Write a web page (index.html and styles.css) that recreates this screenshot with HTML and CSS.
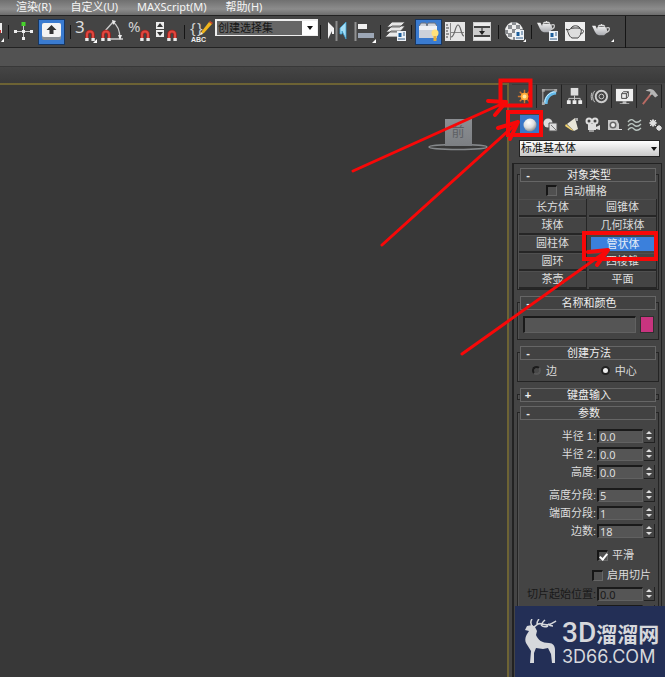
FILE: index.html
```html
<!DOCTYPE html>
<html lang="zh-CN">
<head>
<meta charset="utf-8">
<title>3ds Max</title>
<link rel="stylesheet" href="styles.css">
</head>
<body>
<svg class="defs" aria-hidden="true">
  <defs>
    <linearGradient id="metal" x1="0" y1="0" x2="0" y2="1"><stop offset="0" stop-color="#f4f4f4"/><stop offset="1" stop-color="#a9abb0"/></linearGradient>
    <radialGradient id="ball" cx=".4" cy=".3" r=".7"><stop offset="0" stop-color="#fff"/><stop offset=".6" stop-color="#dcdcdc"/><stop offset="1" stop-color="#8b8b8b"/></radialGradient>
    <symbol id="magnet" viewBox="0 0 10 12"><path d="M2 9V5.500a3 3 0 0 1 6 0V9" fill="none" stroke="#a3221c" stroke-width="3.600"/><path d="M2 9V5.500a3 3 0 0 1 6 0V9" fill="none" stroke="#e0473f" stroke-width="2"/><path d="M.2 9h3.400v3H.2zM6.400 9h3.400v3H6.400z" fill="#e8e8e8"/></symbol>
    <symbol id="teapot" viewBox="0 0 22 16"><path d="M6 5c2-1 8-1 10 0 3 4 1 7-2 9H8C4 13 3 9 1 5L0 3l4 0 2 4z" fill="url(#metal)"/><path d="M7 4c2-2 6-2 8 0M11 1v2" stroke="#ddd" stroke-width="1.500" fill="none"/><path d="M16 6c5-3 6 3 0 5" stroke="#c8c8c8" stroke-width="1.500" fill="none"/></symbol>
    <symbol id="dialog" viewBox="0 0 9 10"><path d="M0 0h9v10H0z" fill="#edf2f7"/><path d="M1.500 2h3v4h-3z" fill="#1c5e9b"/><path d="M6 2h2M6 4h2M1 8h7" stroke="#37618b"/></symbol>
  </defs>
</svg>

<nav class="menubar">
  <a href="#render">渲染(R)</a>
  <a href="#customize">自定义(U)</a>
  <a href="#script">MAXScript(M)</a>
  <a href="#help">帮助(H)</a>
</nav>

<div class="toolbar">
  <div class="tools tools-edge">
    <svg width="6" height="26"><path d="M0 4h2v10H0z" fill="#eee"/><path d="M0 11h1v3H0z" fill="#c33"/><path d="M4 19v4H1z" fill="#fff"/></svg>
  </div>
  <div class="tools tools-wide">
    <button type="button" aria-label="操纵"><svg viewBox="0 0 26 26"><path d="M12.500 5v15M4 12.500h17" stroke="#c9c9c9"/><path d="M3 11h3v3H3zM19 11h3v3h-3zM11 18h3v3h-3zM11 11h3v3h-3z" fill="#eee"/><path d="M10.500 3h4v4h-4z" fill="#46d22c"/></svg></button>
    <button type="button" class="on" aria-label="键盘快捷键覆盖"><svg viewBox="0 0 26 26"><rect x="4" y="4" width="19" height="17" rx="2" fill="#8b9096"/><rect x="4" y="4" width="19" height="14" rx="2" fill="#f3f3f3"/><path d="M13.500 6l5 5h-3v4h-4v-4h-3z" fill="#333"/></svg></button>
  </div>
  <div class="tools">
    <button type="button" aria-label="捕捉开关"><svg viewBox="0 0 26 26"><text x="1" y="14" class="glyph-big">3</text><use href="#magnet" x="11" y="10" width="10" height="12"/><path d="M23 20v4h-4z" fill="#fff"/></svg></button>
    <button type="button" aria-label="角度捕捉"><svg viewBox="0 0 26 26"><path d="M4 12L12 3M12 3c6 4 7 10 7 17M10 20h12" stroke="#ccc" stroke-width="1.300" fill="none"/><path d="M11 1l4 1-3 4zM17 16h4l-2 5z" fill="#eee"/><use href="#magnet" x="0" y="10" width="10" height="12"/></svg></button>
    <button type="button" aria-label="百分比捕捉"><svg viewBox="0 0 26 26"><text x="0" y="13" class="glyph">%</text><use href="#magnet" x="12" y="10" width="10" height="12"/></svg></button>
    <button type="button" aria-label="微调器捕捉"><svg viewBox="0 0 26 26"><path d="M1 3h8v7H1zM1 11h8v7H1z" fill="#ededed"/><path d="M2 8l3-4 3 4zM2 13h6l-3 4z" fill="#333"/><use href="#magnet" x="12" y="10" width="10" height="12"/></svg></button>
  </div>
  <div class="tools tools-named">
    <button type="button" aria-label="编辑命名选择集"><svg viewBox="0 0 26 26"><text x="2" y="14" class="glyph">{</text><text x="9" y="14" class="glyph">}</text><path d="M12 16l2-4 7-9 3 2-8 9z" fill="#f1b51c"/><path d="M21 3l1-1 3 2-1 1z" fill="#d94527"/><path d="M12 16l1-3 2 2z" fill="#eee"/><text x="3" y="23" class="glyph-abc">ABC</text></svg></button>
    <select class="set-select" aria-label="创建选择集"><option>创建选择集</option></select>
  </div>
  <div class="tools">
    <button type="button" aria-label="镜像"><svg viewBox="0 0 26 26"><path d="M12.500 2v20" stroke="#8b8b8b" stroke-width="2"/><path d="M4 3l6 6v6H8v-3l-4 8z" fill="#f1f1f1"/><path d="M22 3l-6 6v6h2v-3l4 8z" fill="#a5def5" stroke="#3d9fd0" stroke-width=".8"/></svg></button>
    <button type="button" aria-label="对齐"><svg viewBox="0 0 26 26"><path d="M4.500 3v19" stroke="#919191" stroke-width="2"/><path d="M7 5h9v5H7z" fill="#f0f0f0"/><path d="M7 14h16v5H7z" fill="#9da7b6"/><path d="M25 20v4h-4z" fill="#fff"/></svg></button>
  </div>
  <div class="tools tools-layer">
    <button type="button" aria-label="层管理器"><svg viewBox="0 0 26 26"><path d="M8 12h13l-4 6H2zM9 7h13l-5 6H3zM9 3h13l-5 5H4z" fill="#e9e9e9" stroke="#4b4b4b" stroke-width=".8"/><use href="#dialog" x="14" y="12" width="9" height="10"/></svg></button>
  </div>
  <div class="tools">
    <button type="button" class="on" aria-label="功能区"><svg viewBox="0 0 26 26"><path d="M4 7l2-3h5l1 2 1-2h7l2 3v12H4z" fill="#ccd1da"/><path d="M4 7h18v4H4z" fill="#eef0f4"/><path d="M4 7l2-3h5l1 3 1-3h7l2 3" fill="none" stroke="#69717e"/><circle cx="20" cy="14" r="3.500" fill="#ffe17c"/><path d="M18.500 17h3v5h-3z" fill="#e9b13a"/></svg></button>
    <button type="button" aria-label="曲线编辑器"><svg viewBox="0 0 26 26"><path d="M3 3h20v19H3z" fill="#e6e6e6"/><path d="M8.500 4v17M8 13.500h14" stroke="#888"/><path d="M4 6h2M4 9h3M4 12h2M4 15h3M4 18h2" stroke="#444"/><path d="M9 18c4 0 4-12 7-12s3 11 6 11" fill="none" stroke="#666" stroke-width="1.200"/></svg></button>
    <button type="button" aria-label="图解视图"><svg viewBox="0 0 26 26"><path d="M4 3h18v19H4z" fill="#ccc"/><path d="M5 4h16v4H5zM5 17h16v4H5z" fill="#ececec"/><path d="M5 8h16M5 17h16" stroke="#444" stroke-width="2"/><path d="M13 9v6" stroke="#222"/><path d="M10 12h6l-3 4z" fill="#222"/></svg></button>
  </div>
  <div class="tools">
    <button type="button" aria-label="材质编辑器"><svg viewBox="0 0 26 26"><circle cx="12" cy="12" r="9" fill="#eee"/><path d="M6 6h4v4H6zM14 6h4v4h-4zM10 10h4v4h-4zM3 11h3v4H3zM6 14h4v4H6zM18 10h3v4h-3zM10 3h4v3h-4zM11 18h4v3h-4z" fill="#8a8d91"/><use href="#dialog" x="13" y="11" width="9" height="10"/><path d="M24 20v3h-3z" fill="#fff"/></svg></button>
  </div>
  <div class="tools tools-last">
    <button type="button" aria-label="渲染设置"><svg viewBox="0 0 26 26"><use href="#teapot" x="2" y="1" width="19" height="14"/><use href="#dialog" x="14" y="12" width="9" height="10"/></svg></button>
    <button type="button" aria-label="渲染帧窗口"><svg viewBox="0 0 26 26"><path d="M3 3h20v19H3z" fill="#eee"/><g fill="#ddd" stroke="#444"><path d="M8 10c3-2 9-2 11 0 1 4-1 7-3 9h-6c-4-2-3-6-6-9l3 1z"/><path d="M9 9c2-3 7-3 9 0z"/><path d="M19 11c4-1 3 4-1 4" fill="none"/></g></svg></button>
    <button type="button" aria-label="渲染产品"><svg viewBox="0 0 26 26"><use href="#teapot" x="3" y="4" width="19" height="14"/><path d="M25 20v3h-3z" fill="#fff"/></svg></button>
  </div>
</div>
<div class="ribbon"></div>
<div class="ribbon-shade"></div>

<main class="workspace">
  <div class="viewport">
    <div class="viewcube">
      <svg viewBox="0 0 62 8"><ellipse cx="31" cy="4" rx="29" ry="2.500" fill="none" stroke="#85888b" stroke-width="1.500"/></svg>
      <span>前</span>
    </div>
  </div>

  <aside class="panel">
    <div class="tabs">
      <button type="button" aria-label="创建"><svg viewBox="0 0 20 20"><path d="M10 3v14M3 10h14M5 5l10 10M15 5L5 15" stroke="#d3772b" stroke-width="1.500"/><circle cx="10" cy="10" r="4" fill="#ffab38"/><circle cx="10" cy="10" r="2" fill="#ffe8a4"/></svg></button>
      <button type="button" aria-label="修改"><svg viewBox="0 0 20 20"><path d="M3 18V3h15" fill="none" stroke="#bbb"/><path d="M4 18C4 10 10 4 17 4v4c-5 0-9 4-9 10z" fill="#63b9e9"/><path d="M5 17C5 10 10 5 17 5" fill="none" stroke="#d5f1ff"/><path d="M2 2h3v3H2zM15 2h3v3h-3zM2 16h3v3H2z" fill="#aaa"/></svg></button>
      <button type="button" aria-label="层次"><svg viewBox="0 0 20 20"><path d="M6 1h8v8H6z" fill="#ddd"/><path d="M10 9v5M4 15v-3h12v3" fill="none" stroke="#c9c9c9"/><path d="M2 14h4v4H2zM8 14h4v4H8zM14 14h4v4h-4z" fill="#eee"/></svg></button>
      <button type="button" aria-label="运动"><svg viewBox="0 0 20 20"><g fill="none" stroke="#ccc"><circle cx="12" cy="10" r="6" stroke-width="2"/><circle cx="12" cy="10" r="2.500"/><path d="M5 4c-3 4-3 8 0 12M2 6c-1 3-1 5 0 8"/></g></svg></button>
      <button type="button" aria-label="显示"><svg viewBox="0 0 20 20"><path d="M1 2h18v13H1z" fill="#eee"/><path d="M7 7l2-2h5v5l-2 2H7zM7 7h5v5M12 7l2-2" fill="none" stroke="#444"/><path d="M8 15h4v2h3v1H5v-1h3z" fill="#bbb"/></svg></button>
      <button type="button" aria-label="实用程序"><svg viewBox="0 0 20 20"><path d="M11 8L3 18" stroke="#b86a63" stroke-width="2"/><path d="M6 4c4-3 7-2 9 0l4 5-3 2-3-3-3 1 1-4z" fill="#b5b5b5"/></svg></button>
    </div>
    <div class="categories">
      <button type="button" class="on" aria-label="几何体"><svg viewBox="0 0 18 18"><circle cx="9" cy="9" r="6.500" fill="url(#ball)"/></svg></button>
      <button type="button" aria-label="图形"><svg viewBox="0 0 18 18"><circle cx="6" cy="7" r="4.500" fill="#ddd"/><path d="M7 7h8v8H7z" fill="#ddd" stroke="#555"/><path d="M9 9l5 5" stroke="#777"/></svg></button>
      <button type="button" aria-label="灯光"><svg viewBox="0 0 18 18"><path d="M12 2l3 11-4 2-7-7z" fill="#e9e6d8"/><path d="M3 8l8 7-3-1-6-4z" fill="#f3d46d"/><path d="M12 2h3v3h-2z" fill="#aaa"/></svg></button>
      <button type="button" aria-label="摄影机"><svg viewBox="0 0 18 18"><circle cx="5" cy="5" r="2.500" fill="none" stroke="#ddd" stroke-width="2"/><circle cx="11" cy="5" r="2.500" fill="none" stroke="#ddd" stroke-width="2"/><path d="M4 8h8v6H4zM12 11l4-2v5l-4-1z" fill="#ddd"/><path d="M5 14h5v2H5z" fill="#999"/></svg></button>
      <button type="button" aria-label="辅助对象"><svg viewBox="0 0 18 18"><path d="M3 4h9l2 4v6H3z" fill="#c9c9c9"/><circle cx="8" cy="9" r="3.500" fill="#666"/><circle cx="8" cy="9" r="2" fill="#eee"/><path d="M13 13.500h4" stroke="#ddd"/></svg></button>
      <button type="button" aria-label="空间扭曲"><svg viewBox="0 0 18 18"><path d="M2 6q3-4 6-1t7-1M2 10q3-4 6-1t7-1M2 14q3-4 6-1t7-1" fill="none" stroke="#b9c4bf" stroke-width="1.300"/></svg></button>
      <button type="button" aria-label="系统"><svg viewBox="0 0 18 18"><g fill="#ddd" stroke="#ddd"><circle cx="6" cy="7" r="2.500"/><path d="M6 3v8M2 7h8M3 4l6 6M9 4l-6 6"/><circle cx="12" cy="12" r="2"/><path d="M12 9v6M9 12h6M10 10l4 4M14 10l-4 4"/></g></svg></button>
    </div>
    <div class="type-wrap">
      <select class="type-select" aria-label="几何体类别"><option>标准基本体</option></select>
    </div>

    <div class="rollouts">
      <section class="rollout">
        <button type="button" class="rollout-head"><b>-</b><span>对象类型</span></button>
        <label class="autogrid"><input type="checkbox">自动栅格</label>
        <div class="objects">
          <button type="button">长方体</button><button type="button">圆锥体</button>
          <button type="button">球体</button><button type="button">几何球体</button>
          <button type="button">圆柱体</button><button type="button" class="on">管状体</button>
          <button type="button">圆环</button><button type="button">四棱锥</button>
          <button type="button">茶壶</button><button type="button">平面</button>
        </div>
      </section>

      <section class="rollout">
        <button type="button" class="rollout-head"><b>-</b><span>名称和颜色</span></button>
        <div class="name-row">
          <input type="text" class="field" aria-label="名称">
          <button type="button" class="swatch" aria-label="颜色"></button>
        </div>
      </section>

      <section class="rollout">
        <button type="button" class="rollout-head"><b>-</b><span>创建方法</span></button>
        <div class="methods">
          <label><input type="radio" name="method">边</label>
          <label><input type="radio" name="method" checked>中心</label>
        </div>
      </section>

      <section class="rollout closed">
        <button type="button" class="rollout-head"><b>+</b><span>键盘输入</span></button>
      </section>

      <section class="rollout">
        <button type="button" class="rollout-head"><b>-</b><span>参数</span></button>
        <div class="params">
          <div class="param-set">
            <label for="r1">半径 1:</label><input id="r1" class="field" value="0.0"><span class="spin"></span>
            <label for="r2">半径 2:</label><input id="r2" class="field" value="0.0"><span class="spin"></span>
            <label for="h">高度:</label><input id="h" class="field" value="0.0"><span class="spin"></span>
          </div>
          <div class="param-set">
            <label for="hs">高度分段:</label><input id="hs" class="field" value="5"><span class="spin"></span>
            <label for="cs">端面分段:</label><input id="cs" class="field" value="1"><span class="spin"></span>
            <label for="sd">边数:</label><input id="sd" class="field" value="18"><span class="spin"></span>
          </div>
          <label class="check smooth"><input type="checkbox" checked>平滑</label>
          <label class="check"><input type="checkbox">启用切片</label>
          <div class="param-set disabled">
            <label for="sf">切片起始位置:</label><input id="sf" class="field" value="0.0" disabled><span class="spin"></span>
            <label for="st">切片结束位置:</label><input id="st" class="field" disabled><span class="spin"></span>
          </div>
        </div>
      </section>
    </div>
  </aside>
</main>

<div class="brand">
  <svg viewBox="0 0 34 46" class="deer" fill="#d6d8dc"><path d="M3 7l5-1 3 2 2 4-1 4c2 5 6 8 13 8 4 0 6 3 6 7v13h-3l-1-9-3-6-5 1-7-1-2 5 0 10H6l1-12-5-8c-2-5 1-9 3-12l-4-1z"/><path d="M9 8C6 5 6 3 8 0M9 8c4 0 3-5 9-3s9 0 14-3M13 6c0-2 0-4 2-6M18 5c0-2 2-3 3-4M24 5c2 2 3 2 5 2M17 6c2 2 5 2 7 1" fill="none" stroke="#d6d8dc" stroke-width="1.500"/></svg>
  <div class="brand-text">
    <div class="brand-name"><span>3D</span>溜溜网</div>
    <div class="brand-site">3D66.COM</div>
  </div>
</div>

<svg class="marks" width="665" height="677" viewBox="0 0 665 677" fill="none" stroke="#f80808" aria-hidden="true">
  <g stroke-width="4"><path d="M500.500 80.500h30v25h-30zM508 112h33v23h-33zM584 233h72v26h-72z"/></g>
  <g stroke-width="3" stroke-linecap="round" stroke-linejoin="round">
    <path d="M353 171L506 102M382 245L517 123M462 354L608 250"/>
    <path d="M488 101l18 1-11 13M498 128l20-6-8 17M588 252l20-2-11 15" stroke-width="4"/>
  </g>
</svg>
</body>
</html>
```
FILE: styles.css
```css
* { box-sizing: border-box; }

body {
  margin: 0;
  height: 100vh;
  display: flex;
  flex-direction: column;
  position: relative;
  overflow: hidden;
  background: #444;
  color: #ddd;
  font: 11px/14px "Liberation Sans", "Noto Sans CJK SC", sans-serif;
}

button, input, select {
  font: inherit;
  color: inherit;
  margin: 0;
  padding: 0;
  border: 0;
  border-radius: 0;
  background: none;
}

svg { display: block; }
.defs { position: absolute; width: 0; height: 0; }

.menubar {
  flex: none;
  display: flex;
  gap: 19px;
  height: 15px;
  padding-left: 16px;
  line-height: 14px;
  background: linear-gradient(#707070, #8c8c8c 60%, #6c6c6c);
  font-family: "Noto Sans", "Noto Sans CJK SC", sans-serif;
}
.menubar a { color: #f4f4f4; text-decoration: none; }

.toolbar {
  flex: none;
  display: flex;
  height: 33px;
  padding-top: 3px;
  background: #444;
  border-top: 1px solid #222;
  border-bottom: 1px solid #222;
}
.tools { display: flex; align-items: flex-start; padding: 0 3px; position: relative; }
.tools::after {
  content: "";
  position: absolute;
  right: 0;
  top: 6px;
  height: 14px;
  border-right: 1px solid #151515;
}
.tools-edge { padding: 0 3px 0 0; }
.tools-wide { padding: 0 6px 0 2px; }
.tools-named { padding-right: 3px; }
.tools-layer { padding: 0 2px; }
.tools-last { padding-right: 10px; }
.tools-last::after { top: -3px; height: 32px; }
.tools button { width: 27px; height: 26px; }
.tools svg { height: 26px; }
.tools button svg { width: 26px; }
.tools .on { background: #3a7bd0; box-shadow: inset 0 0 0 1px #18365f; }
.glyph-big { font: 17px "Noto Sans", sans-serif; fill: #ddd; }
.glyph { font: 15px "Noto Sans", sans-serif; fill: #d2d2d2; }
.glyph-abc { font: bold 7px "Liberation Sans", sans-serif; fill: #eee; }

.set-select {
  appearance: none;
  width: 103px;
  height: 17px;
  padding-left: 1px;
  border: 2px solid #eee;
  border-bottom-width: 1px;
  border-right-width: 1px;
  line-height: 14px;
  color: #151515;
  background: linear-gradient(90deg, #666 85px, #fff 85px);
}
.tools-named::before {
  content: "";
  position: absolute;
  right: 8px;
  top: 7px;
  border: 3px solid transparent;
  border-top: 4px solid #111;
  border-bottom: 0;
}

.ribbon { flex: none; height: 18px; background: #525252; }
.ribbon-shade { flex: none; height: 17px; background: linear-gradient(#454545, #3a3a3a); border-top: 1px solid #383838; }

.workspace { flex: 1; min-height: 0; display: grid; grid-template-columns: 1fr 156px; }
.viewport {
  background: #383838;
  border-top: 2px solid #6d6334;
  border-right: 2px solid #6d6334;
  position: relative;
}
.viewcube {
  position: absolute;
  top: 34px;
  right: 18px;
  width: 62px;
  display: flex;
  justify-content: center;
}
.viewcube svg { position: absolute; top: 24px; width: 62px; height: 8px; }
.viewcube span {
  position: relative;
  width: 27px;
  height: 27px;
  line-height: 26px;
  text-align: center;
  font-size: 13px;
  color: #5d6064;
  background: linear-gradient(#8b8e92, #7c7f83);
}

.panel { min-width: 0; overflow: hidden; background: #444; padding-left: 3px; }
.tabs { display: flex; height: 27px; padding-top: 1px; }
.tabs button { width: 25px; height: 24px; display: grid; place-items: center; border-right: 1px solid #222; border-top: 1px solid #383838; }
.tabs svg { width: 19px; height: 19px; }
.categories { display: flex; gap: 1px; padding: 5px 0 0 8px; }
.categories button { flex: none; width: 20px; height: 19px; display: grid; place-items: center; }
.categories svg { width: 18px; height: 18px; }
.categories .on { background: #3a77c8; }

.type-wrap { position: relative; margin: 6px 5px 6px 7px; }
.type-wrap::after {
  content: "";
  position: absolute;
  right: 3px;
  top: 7px;
  border: 3px solid transparent;
  border-top: 4px solid #111;
  border-bottom: 0;
}
.type-select {
  appearance: none;
  display: block;
  width: 100%;
  height: 17px;
  padding-left: 1px;
  border: 1px solid #222;
  line-height: 15px;
  color: #111;
  background: linear-gradient(#fff, #c9c9c9);
}

.rollouts {
  margin-right: 3px;
  padding: 10px 2px 0 3px;
  border: 1px solid #222;
  border-width: 1px 1px 0 2px;
  height: 100%;
}
.rollout { border: 1px solid #242424; margin-bottom: 12px; box-shadow: inset 1px 0 #515151; }
.rollout-head {
  display: grid;
  grid-template-columns: 10px 1fr 10px;
  width: calc(100% - 4px);
  height: 14px;
  margin: -7px 2px 0;
  padding-left: 2px;
  border: 1px solid #666;
  line-height: 12px;
  background: #424242;
  color: #eee;
}
.closed { height: 6px; }

input[type="checkbox"] {
  appearance: none;
  flex: none;
  width: 11px;
  height: 11px;
  border: 1px solid #666;
  border-top: 2px solid #161616;
  border-left: 2px solid #161616;
  background: #505050;
  position: relative;
}
input[type="checkbox"]:checked::after {
  content: "";
  position: absolute;
  left: 2px;
  top: 0;
  width: 3px;
  height: 6px;
  border: solid #fff;
  border-width: 0 2px 2px 0;
  transform: rotate(40deg);
}
.autogrid { display: flex; align-items: center; gap: 6px; height: 17px; padding-left: 28px; }

.objects { display: grid; grid-template-columns: 1fr 1fr; column-gap: 2px; padding: 0 1px; }
.objects button {
  height: 18px;
  line-height: 16px;
  border-bottom: 2px solid #262626;
  border-right: 1px solid #262626;
  box-shadow: inset 0 1px #4f4f4f;
}
.objects .on { background: #3b80dc; border: 2px solid #444; line-height: 14px; color: #e3ecf8; box-shadow: none; }

.field {
  min-width: 0;
  border: 1px solid #616161;
  border-top: 2px solid #1a1a1a;
  border-left: 2px solid #1a1a1a;
  background: #555;
}
.name-row { display: flex; gap: 4px; padding: 6px 4px 6px 5px; }
.name-row .field { flex: 1; height: 17px; }
.swatch { width: 14px; height: 17px; background: #c8347f; border: 1px solid #303030; }

.methods { display: grid; grid-template-columns: 6fr 5fr; height: 21px; padding-left: 14px; }
.methods label { display: flex; align-items: center; gap: 5px; }
input[type="radio"] {
  appearance: none;
  width: 9px;
  height: 9px;
  border: 2px solid #1c1c1c;
  border-right-color: #555;
  border-bottom-color: #555;
  border-radius: 50%;
  background: #484848;
}
input[type="radio"]:checked { background: #eee; border-color: #222; }

.params { padding: 7px 3px 0 0; }
.param-set { display: grid; grid-template-columns: 1fr 46px 11px; column-gap: 1px; margin-bottom: 5px; grid-auto-rows: 18px; align-items: center; }
.param-set label { text-align: right; white-space: nowrap; }
.param-set .field { height: 14px; width: 46px; line-height: 11px; padding-left: 1px; font-family: "Noto Sans", sans-serif; }
.spin {
  height: 14px;
  display: flex;
  flex-direction: column;
  align-items: center;
  justify-content: center;
  gap: 3px;
  border-right: 1px solid #222;
  border-bottom: 1px solid #222;
}
.spin::before, .spin::after { content: ""; border: 3px solid transparent; }
.spin::before { border-top: 0; border-bottom: 3px solid #ddd; }
.spin::after { border-bottom: 0; border-top: 3px solid #ddd; }
.check { display: flex; align-items: center; gap: 4px; height: 20px; padding-left: 74px; }
.smooth { padding-left: 79px; }
.disabled { color: #191919; }

.brand {
  position: absolute;
  right: 0;
  bottom: 0;
  width: 150px;
  height: 71px;
  display: flex;
  gap: 4px;
  padding: 13px 0 0 9px;
  background: #232f56;
  color: #d6d8dc;
}
.deer { width: 34px; height: 46px; }
.brand-name { display: flex; align-items: center; height: 28px; font: 700 21px/28px "Noto Sans CJK SC", sans-serif; white-space: nowrap; }
.brand-name span { font: 500 28px/28px Roboto, sans-serif; }
.brand-site { font: 18px/20px Inter, sans-serif; }
.marks { position: absolute; top: 0; right: 0; pointer-events: none; }
```
